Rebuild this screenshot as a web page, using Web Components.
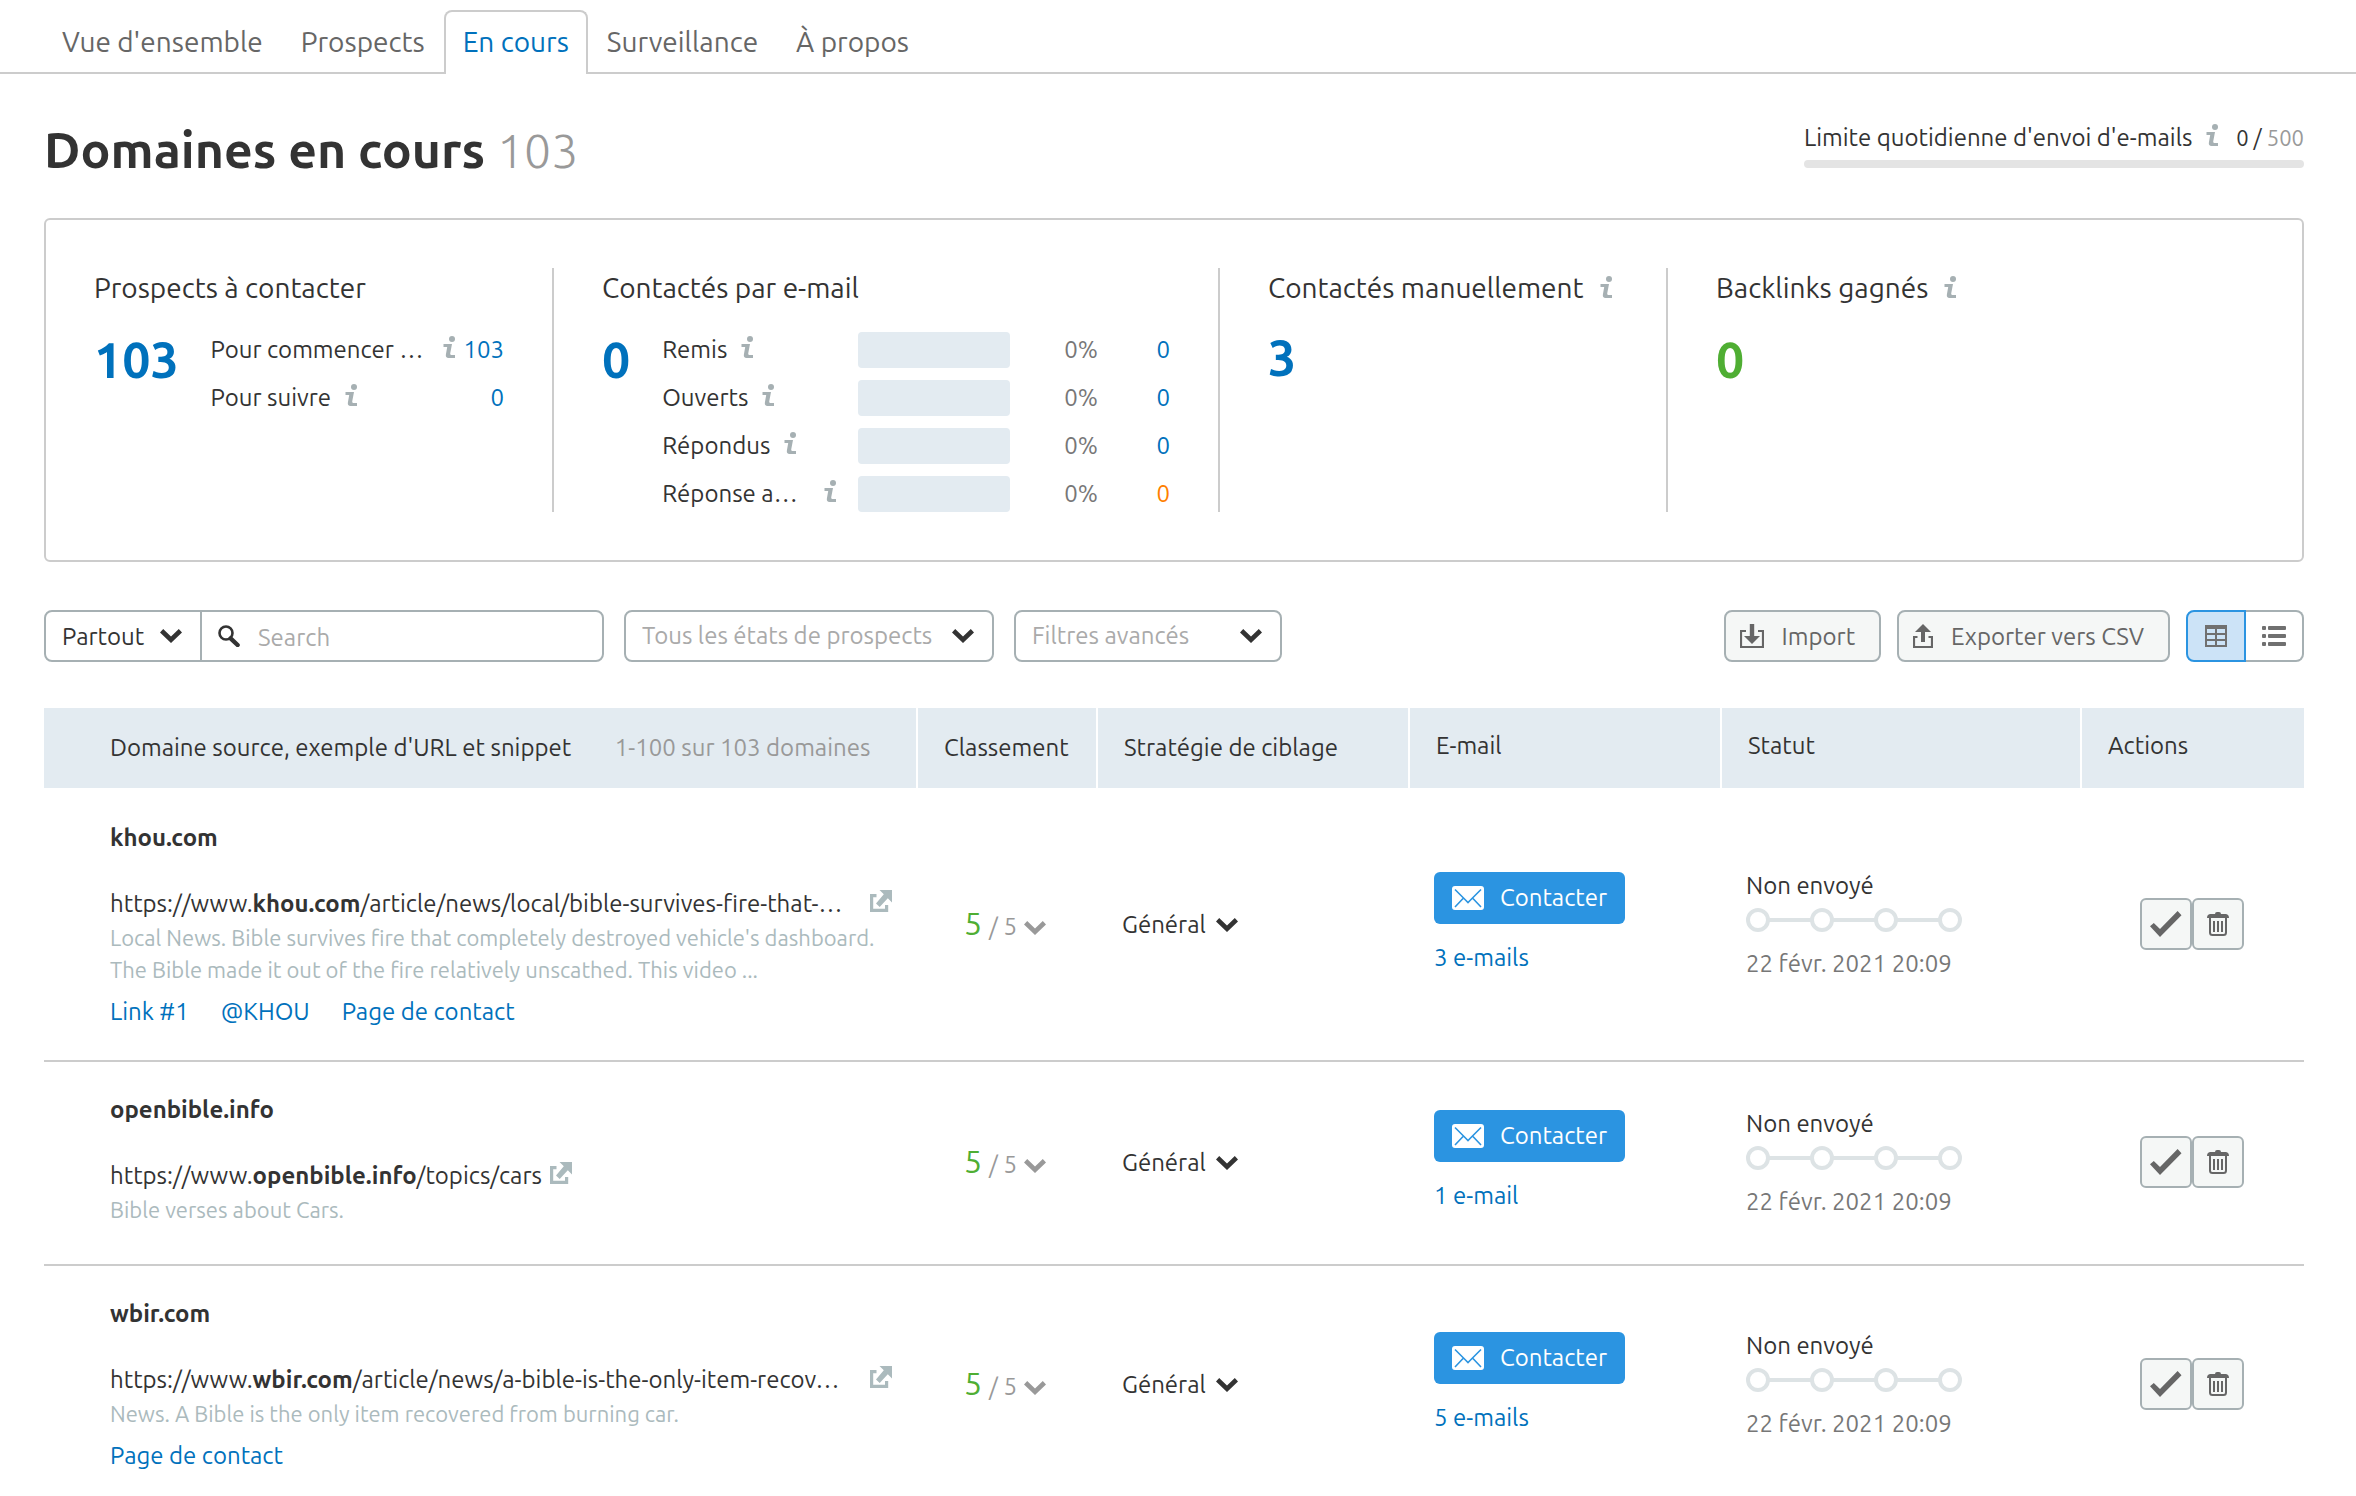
<!DOCTYPE html>
<html lang="fr">
<head>
<meta charset="utf-8">
<title>Domaines en cours</title>
<style>
  html { scrollbar-width: none; background: #fff; }
  body {
    margin: 0;
    font-family: Ubuntu, "Noto Sans", "Open Sans", sans-serif;
    font-size: 24px;
    line-height: 32px;
    color: #333;
    --blue: #0071bc;
    --line: #ccc;
    --control: #a6b0b3;
    --pale: #e3ebf1;
    --muted: #999;
  }
</style>
</head>
<body>
<outreach-page></outreach-page>

<script>
const BASE = `
  *, *::before, *::after { box-sizing: border-box; }
  a { color: var(--blue); text-decoration: none; }
  button, input, select { font: inherit; color: inherit; margin: 0; }
  svg { display: block; }
`;

function define(name, css, html) {
  const tpl = document.createElement('template');
  customElements.define(name, class extends HTMLElement {
    constructor() {
      super();
      this.attachShadow({ mode: 'open' });
    }
    connectedCallback() {
      if (this.shadowRoot.childNodes.length) return;
      tpl.innerHTML = `<style>${BASE}${css}</style>${typeof html === 'function' ? html(this) : html}`;
      this.shadowRoot.append(tpl.content.cloneNode(true));
    }
  });
}

/* Icons: name -> [width, height, markup] */
const ICONS = {
  info: [12, 22, '<circle cx="9" cy="3" r="3"/><path d="M.5 8H9L7.2 17.6Q7 19 8.2 19H12v3H5.6Q2.3 22 2.9 18.6L4.2 11H.5Z"/>'],
  chevron: [22, 14, '<path d="M0 3.4 3.2 0 11 7.4 18.8 0 22 3.4 11 14Z"/>'],
  search: [22, 22, '<circle cx="8" cy="8" r="6.5" fill="none" stroke="currentColor" stroke-width="2.6"/><path d="M12.6 13.4 19.6 20" stroke="currentColor" stroke-width="4.4" stroke-linecap="round"/>'],
  import: [24, 24, '<path d="M6 7H1v16h22V7h-5" fill="none" stroke="currentColor" stroke-width="2.2"/><path d="M9.8 0h4.4v12H20l-8 8-8-8h5.8Z"/>'],
  export: [20, 24, '<path d="M4.5 13H1v10h18V13h-3.5" fill="none" stroke="currentColor" stroke-width="2.2"/><path d="M8 18V8H2l8-8 8 8h-6v10Z"/>'],
  grid: [22, 22, '<path fill-rule="evenodd" d="M0 0h22v22H0ZM2 4v4h8V4ZM12 4v4h8V4ZM2 10v4h8v-4ZM12 10v4h8v-4ZM2 16v4h8v-4ZM12 16v4h8v-4Z"/>'],
  list: [24, 20, '<rect width="4" height="4" rx="1"/><rect y="8" width="4" height="4" rx="1"/><rect y="16" width="4" height="4" rx="1"/><rect x="6" width="18" height="4" rx="1"/><rect x="6" y="8" width="18" height="4" rx="1"/><rect x="6" y="16" width="18" height="4" rx="1"/>'],
  external: [22, 22, '<path d="M6.5 5.7H1.6v14.7h15V15" fill="none" stroke="currentColor" stroke-width="3.2"/><path d="M9.5 0H22v12.5l-4.2-4.2L9.7 17 6 13.500 13.800 4.300Z"/>'],
  mail: [32, 24, '<rect width="32" height="24" rx="3"/><path d="M3 3.500 13.500 14 16 16.500 18.500 14 29 3.500M3 21 11.500 12M29 21 20.500 12" fill="none" stroke="#2b94e1" stroke-width="1.6"/>'],
  check: [32, 26, '<path d="M0 15.200 3.800 12 10 18 27.600 0 31.500 4.200 10 26Z"/>'],
  trash: [22, 24, '<path d="M8 2q0-2 2-2h2q2 0 2 2h5q3 .5 3 4H0q0-3.500 3-4Z"/><path d="M3 6v14.500Q3 23 5.500 23h11q2.500 0 2.500-2.500V6" fill="none" stroke="currentColor" stroke-width="2"/><path d="M6 9h2v11H6ZM10 9h2v11h-2ZM14 9h2v11h-2Z"/>']
};

define('ui-icon', `
  :host { display: inline-block; flex: none; }
  :host([name="info"]) { color: var(--control); }
  svg { fill: currentColor; }
`, el => {
  const [w, h, body] = ICONS[el.getAttribute('name')];
  return `<svg width="${w}" height="${h}" viewBox="0 0 ${w} ${h}" aria-hidden="true">${body}</svg>`;
});

define('tab-link', `
  :host { display: block; }
  a {
    display: block; height: 64px; padding: 0 17px;
    border: 2px solid transparent; border-bottom: 0; border-radius: 8px 8px 0 0;
    font-size: 28px; line-height: 60px; color: #666; white-space: nowrap;
  }
  :host([current]) a { border-color: var(--line); background: #fff; color: var(--blue); }
`, '<a href="#"><slot></slot></a>');

define('tab-bar', `
  :host { display: block; }
  nav {
    display: flex; padding: 10px 43px 0;
    background: linear-gradient(var(--line), var(--line)) bottom / 100% 2px no-repeat;
  }
`, '<nav><slot></slot></nav>');

define('quota-meter', `
  :host { display: block; width: 500px; padding-top: 5px; }
  div { display: flex; align-items: baseline; gap: 14px; margin-bottom: 6px; }
  .used { margin-left: auto; font-size: 22px; }
  i { font-style: normal; color: var(--muted); }
  hr { margin: 0; height: 8px; border: 0; border-radius: 4px; background: #e4e4e4; }
`, `<div><span><slot></slot></span><ui-icon name="info"></ui-icon><span class="used">0 / <i>500</i></span></div><hr>`);

define('page-header', `
  :host { display: flex; justify-content: space-between; align-items: flex-start; padding: 43px 0 36px; }
  h1 { margin: 0; font-size: 50px; line-height: 64px; font-weight: 700; }
  h1 span { font-weight: 300; font-size: 48px; color: var(--muted); }
`, `<h1>Domaines en cours <span>103</span></h1><quota-meter>Limite quotidienne d'envoi d'e-mails</quota-meter>`);

/* One column of the summary panel: title, large figure and an optional list */
define('stat-card', `
  :host { display: block; flex: none; padding: 0 48px; }
  :host(:not(:first-of-type)) { border-left: 2px solid var(--line); }
  h2 { display: flex; align-items: baseline; gap: 16px; margin: 0 0 24px; font-size: 28px; line-height: 40px; font-weight: 400; white-space: nowrap; }
  div { display: flex; gap: 32px; }
  a { font-size: 50px; line-height: var(--figure-line, 54px); font-weight: 700; }
  :host([tone="green"]) a { color: #4fae33; }
  .list { flex: 1; display: flex; flex-direction: column; gap: 12px; }
`, el => `<h2>${el.getAttribute('title-text')}${el.hasAttribute('info') ? '<ui-icon name="info"></ui-icon>' : ''}</h2>
  <div><a href="#">${el.getAttribute('value')}</a><div class="list"><slot></slot></div></div>`);

define('stat-row', `
  :host { display: flex; align-items: center; height: 36px; }
  .name { flex: 1; display: flex; align-items: baseline; gap: 14px; white-space: nowrap; }
  .name span { min-width: var(--label, 0); }
  .bar { width: 152px; height: 36px; border-radius: 4px; background: var(--pale); }
  .pct { width: 88px; text-align: right; color: #777; }
  :host([pct]) a { width: 72px; text-align: right; }
  :host([tone="orange"]) a { color: #ff7f00; }
`, el => `<span class="name"><span><slot></slot></span><ui-icon name="info"></ui-icon></span>
  ${el.hasAttribute('pct') ? `<span class="bar"></span><span class="pct">${el.getAttribute('pct')}</span>` : ''}
  <a href="#">${el.getAttribute('value')}</a>`);

define('summary-panel', `
  :host { display: flex; padding: 48px 0; border: 2px solid var(--line); border-radius: 6px; }
  .todo { width: 506px; }
  .mailed { width: 666px; }
  .manual { width: 448px; --figure-line: 50px; }
  .won { flex: 1; }
  .cut { --label: 218px; }
  .mailed .cut { --label: 148px; }
`, `
  <stat-card class="todo" title-text="Prospects à contacter" value="103">
    <stat-row class="cut" value="103">Pour commencer …</stat-row>
    <stat-row value="0">Pour suivre</stat-row>
  </stat-card>
  <stat-card class="mailed" title-text="Contactés par e-mail" value="0">
    <stat-row pct="0%" value="0">Remis</stat-row>
    <stat-row pct="0%" value="0">Ouverts</stat-row>
    <stat-row pct="0%" value="0">Répondus</stat-row>
    <stat-row class="cut" pct="0%" value="0" tone="orange">Réponse a…</stat-row>
  </stat-card>
  <stat-card class="manual" title-text="Contactés manuellement" value="3" info></stat-card>
  <stat-card class="won" title-text="Backlinks gagnés" value="0" tone="green" info></stat-card>`);

/* Native select with its own arrow; "boxed" and "inline" looks */
define('drop-down', `
  :host { display: inline-grid; align-items: center; }
  select, ui-icon { grid-area: 1 / 1; }
  select {
    appearance: none; width: 100%; height: 48px; border: 0; background: none;
    padding: 2px 54px 0 16px; text-overflow: ellipsis; cursor: pointer;
  }
  ui-icon { justify-self: end; margin-right: 18px; pointer-events: none; color: #333; }
  :host([boxed]) { border: 2px solid var(--control); border-radius: 8px; color: #aaa; }
  :host([boxed]) select { padding-top: 0; }
  :host([inline]) select { height: 32px; padding: 0 32px 0 0; }
  :host([inline]) ui-icon { margin: 0; }
`, el => `<select aria-label="${el.getAttribute('label')}"><option>${el.getAttribute('text')}</option></select><ui-icon name="chevron"></ui-icon>`);

define('search-box', `
  :host { display: flex; width: 560px; height: 52px; border: 2px solid var(--control); border-radius: 8px; }
  drop-down { width: 156px; border-right: 2px solid var(--control); }
  label { flex: 1; display: flex; align-items: center; gap: 18px; padding-left: 16px; }
  input { flex: 1; min-width: 0; height: 48px; border: 0; padding: 2px 0 0; background: none; outline: 0; }
  input::placeholder { color: #aaa; opacity: 1; }
`, `<drop-down label="Portée" text="Partout"></drop-down>
  <label><ui-icon name="search"></ui-icon><input type="text" placeholder="Search" aria-label="Search"></label>`);

define('tool-button', `
  :host { display: block; }
  button {
    display: flex; align-items: center; gap: 18px; height: 52px; padding: 0 24px 0 14px;
    border: 2px solid var(--control); border-radius: 8px; background: #f5f7f6; color: #666; white-space: nowrap;
  }
  span { padding-top: 2px; }
`, el => `<button type="button"><ui-icon name="${el.getAttribute('icon')}"></ui-icon><span><slot></slot></span></button>`);

define('view-switch', `
  :host { display: flex; color: #707070; }
  button { display: grid; place-items: center; height: 52px; border: 2px solid var(--control); background: #fff; padding: 0; }
  button:first-of-type { width: 60px; border-color: #2b94e1; border-radius: 8px 0 0 8px; background: #cce3f7; }
  button:last-of-type { width: 58px; border-left: 0; border-radius: 0 8px 8px 0; }
`, `<button type="button" aria-label="Tableau" aria-pressed="true"><ui-icon name="grid"></ui-icon></button><button type="button" aria-label="Liste" aria-pressed="false"><ui-icon name="list"></ui-icon></button>`);

define('filter-bar', `
  :host { display: flex; gap: 20px; padding: 48px 0 46px; }
  .states { width: 370px; }
  .advanced { width: 268px; }
  .right { display: flex; gap: 16px; margin-left: auto; }
`, `<search-box></search-box>
  <drop-down boxed class="states" label="États" text="Tous les états de prospects"></drop-down>
  <drop-down boxed class="advanced" label="Filtres" text="Filtres avancés"></drop-down>
  <div class="right">
    <tool-button icon="import">Import</tool-button>
    <tool-button icon="export">Exporter vers CSV</tool-button>
    <view-switch></view-switch>
  </div>`);

define('rating-menu', `
  :host { display: block; }
  button { display: flex; align-items: baseline; gap: 7px; padding: 0; border: 0; background: none; color: var(--muted); white-space: nowrap; }
  b { font-size: 32px; font-weight: 400; color: #4fae33; }
`, `<button type="button"><b>5</b><span>/ 5</span><ui-icon name="chevron"></ui-icon></button>`);

define('mail-contact', `
  :host { display: flex; flex-direction: column; align-items: flex-start; gap: 18px; padding-bottom: 4px; }
  button {
    display: flex; align-items: center; gap: 16px; height: 52px; padding: 0 18px;
    border: 0; border-radius: 6px; background: #2b94e1; color: #fff;
  }
`, '<button type="button"><ui-icon name="mail"></ui-icon>Contacter</button><a href="#"><slot></slot></a>');

define('send-status', `
  :host { display: block; }
  svg { margin: 6px 0 16px; }
  .date { color: #777; }
`, `<div>Non envoyé</div>
  <svg width="216" height="24" viewBox="0 0 216 24" fill="#fff" stroke="#dde3e5" stroke-width="4">
    <path d="M12 12H204"/><circle cx="12" cy="12" r="10"/><circle cx="76" cy="12" r="10"/><circle cx="140" cy="12" r="10"/><circle cx="204" cy="12" r="10"/>
  </svg>
  <div class="date"><slot></slot></div>`);

define('row-actions', `
  :host { display: flex; justify-content: center; color: #666; }
  button { display: grid; place-items: center; width: 52px; height: 52px; padding: 0; border: 2px solid var(--control); border-radius: 6px; background: #f5f7f6; }
`, `<button type="button" aria-label="Valider"><ui-icon name="check"></ui-icon></button><button type="button" aria-label="Supprimer"><ui-icon name="trash"></ui-icon></button>`);

define('domain-info', `
  :host { display: block; }
  h3 { margin: 0 0 34px; font-size: 24px; font-weight: 700; }
  .url { display: flex; align-items: center; gap: 8px; margin-bottom: 2px; white-space: nowrap; }
  .url a:first-child { color: inherit; }
  :host([cut]) .url a:first-child { width: 752px; }
  .url ui-icon { color: #abbabd; }
  p { margin: 0; font-size: 22px; color: #abbabd; }
  .links { display: flex; gap: 32px; margin-top: 8px; line-height: 36px; }
`, el => {
  const name = el.getAttribute('name');
  return `<h3>${name}</h3>
    <div class="url"><a href="#">https://www.<b>${name}</b>${el.getAttribute('path')}</a><a href="#" aria-label="Ouvrir"><ui-icon name="external"></ui-icon></a></div>
    <p><slot></slot></p>
    <div class="links">${(el.getAttribute('links') || '').split('|').filter(Boolean).map(t => `<a href="#">${t}</a>`).join('')}</div>`;
});

const PROSPECTS = [
  { name: 'khou.com', path: '/article/news/local/bible-survives-fire-that-…', cut: true,
    text: "Local News. Bible survives fire that completely destroyed vehicle's dashboard. The Bible made it out of the fire relatively unscathed. This video ...",
    links: 'Link #1|@KHOU|Page de contact', mails: '3 e-mails' },
  { name: 'openbible.info', path: '/topics/cars', text: 'Bible verses about Cars.', links: '', mails: '1 e-mail' },
  { name: 'wbir.com', path: '/article/news/a-bible-is-the-only-item-recov…', cut: true,
    text: 'News. A Bible is the only item recovered from burning car.', links: 'Page de contact', mails: '5 e-mails' }
];

define('prospect-table', `
  :host { display: block; }
  table { width: 100%; table-layout: fixed; border-collapse: separate; border-spacing: 0; }
  .rank { width: 180px; } .plan, .mail { width: 312px; } .status { width: 360px; } .acts { width: 222px; }
  th { height: 80px; padding: 0 0 0 26px; background: var(--pale); border-right: 2px solid #fff; text-align: left; font-weight: 400; white-space: nowrap; }
  th:first-child, td:first-child { padding-left: 66px; }
  th:nth-child(n+4) { padding-bottom: 4px; }
  th:last-child { border-right: 0; }
  th span { margin-left: 38px; color: var(--muted); }
  td { padding: 0 0 0 24px; vertical-align: middle; border-top: 2px solid var(--line); }
  tbody tr:first-child td { border-top-color: transparent; }
  td:first-child { padding: 32px 24px 30px 66px; }
  td:nth-child(2) { padding-left: 46px; }
  td:last-child { padding: 0 2px 2px 0; }
`, `<table>
  <colgroup><col><col class="rank"><col class="plan"><col class="mail"><col class="status"><col class="acts"></colgroup>
  <thead><tr><th>Domaine source, exemple d'URL et snippet <span>1-100 sur 103 domaines</span></th><th>Classement</th><th>Stratégie de ciblage</th><th>E-mail</th><th>Statut</th><th>Actions</th></tr></thead>
  <tbody>${PROSPECTS.map(p => `<tr>
    <td><domain-info name="${p.name}" path="${p.path}" links="${p.links}" ${p.cut ? 'cut' : ''}>${p.text}</domain-info></td>
    <td><rating-menu></rating-menu></td>
    <td><drop-down inline label="Stratégie" text="Général"></drop-down></td>
    <td><mail-contact>${p.mails}</mail-contact></td>
    <td><send-status>22 févr. 2021 20:09</send-status></td>
    <td><row-actions></row-actions></td>
  </tr>`).join('')}</tbody></table>`);

define('outreach-page', `
  :host { display: block; }
  main { padding: 0 52px 0 44px; }
`, `<tab-bar>
    <tab-link>Vue d'ensemble</tab-link><tab-link>Prospects</tab-link><tab-link current>En cours</tab-link><tab-link>Surveillance</tab-link><tab-link>À propos</tab-link>
  </tab-bar>
  <main>
    <page-header></page-header>
    <summary-panel></summary-panel>
    <filter-bar></filter-bar>
    <prospect-table></prospect-table>
  </main>`);
</script>
</body>
</html>
